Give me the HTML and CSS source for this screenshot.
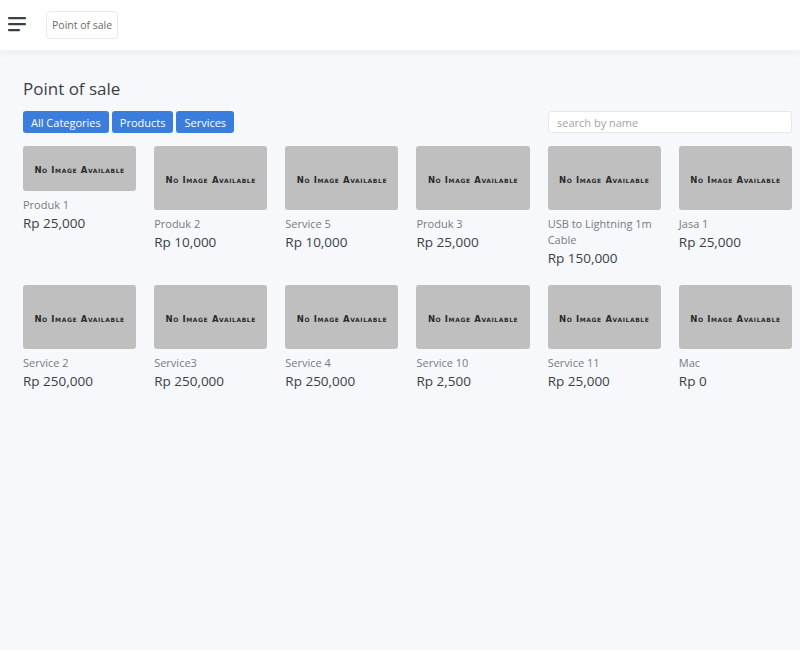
FILE: index.html
```html
<!DOCTYPE html>
<html lang="id">
<head>
<meta charset="utf-8">
<title>Point of sale</title>
<link rel="stylesheet" href="styles.css">
</head>
<body>
<header class="topbar">
  <button class="burger" aria-label="menu">
    <svg width="19" height="16" viewBox="0 0 19 16"><rect x="0" y="1" width="18" height="2.2" rx="1" fill="#3b3f46"/><rect x="0" y="7" width="18" height="2.2" rx="1" fill="#3b3f46"/><rect x="0" y="13" width="12" height="2.2" rx="1" fill="#3b3f46"/></svg>
  </button>
  <div class="crumb">Point of sale</div>
</header>
<main class="content">
  <h1 class="title">Point of sale</h1>
  <div class="toolbar">
    <div class="filters">
      <button class="btn">All Categories</button>
      <button class="btn">Products</button>
      <button class="btn">Services</button>
    </div>
    <input class="search" type="text" placeholder="search by name">
  </div>
  <div class="grid">
    <div class="card"><div class="img short">No Image Available</div><div class="name">Produk 1</div><div class="price">Rp 25,000</div></div>
    <div class="card"><div class="img">No Image Available</div><div class="name">Produk 2</div><div class="price">Rp 10,000</div></div>
    <div class="card"><div class="img">No Image Available</div><div class="name">Service 5</div><div class="price">Rp 10,000</div></div>
    <div class="card"><div class="img">No Image Available</div><div class="name">Produk 3</div><div class="price">Rp 25,000</div></div>
    <div class="card"><div class="img">No Image Available</div><div class="name">USB to Lightning 1m Cable</div><div class="price">Rp 150,000</div></div>
    <div class="card"><div class="img">No Image Available</div><div class="name">Jasa 1</div><div class="price">Rp 25,000</div></div>
    <div class="card"><div class="img">No Image Available</div><div class="name">Service 2</div><div class="price">Rp 250,000</div></div>
    <div class="card"><div class="img">No Image Available</div><div class="name">Service3</div><div class="price">Rp 250,000</div></div>
    <div class="card"><div class="img">No Image Available</div><div class="name">Service 4</div><div class="price">Rp 250,000</div></div>
    <div class="card"><div class="img">No Image Available</div><div class="name">Service 10</div><div class="price">Rp 2,500</div></div>
    <div class="card"><div class="img">No Image Available</div><div class="name">Service 11</div><div class="price">Rp 25,000</div></div>
    <div class="card"><div class="img">No Image Available</div><div class="name">Mac</div><div class="price">Rp 0</div></div>
  </div>
</main>
</body>
</html>
```
FILE: styles.css
```css
* { box-sizing: border-box; }
html, body { margin: 0; padding: 0; }
body {
  background: #f6f8fc;
  font-family: "Open Sans", "Liberation Sans", sans-serif;
  color: #3b3f46;
  min-height: 650px;
}
.topbar {
  height: 50px;
  background: #fff;
  display: flex;
  align-items: center;
  padding-left: 8px;
  box-shadow: 0 2px 8px rgba(30, 40, 60, 0.06);
  position: relative;
}
.burger {
  border: 0;
  background: none;
  padding: 0;
  width: 19px;
  height: 16px;
  display: flex;
  margin-top: -2px;
}
.crumb {
  margin-left: 19px;
  height: 28px;
  padding: 0 5px;
  border: 1px solid #e8eaee;
  border-radius: 4px;
  display: flex;
  align-items: center;
  font-size: 10.5px;
  color: #6e6a66;
}
.content {
  padding: 27px 8px 20px 23px;
}
.title {
  margin: 0 0 10px 0;
  font-size: 17px;
  font-weight: 500;
  line-height: 24px;
  color: #3b3f46;
}
.toolbar {
  display: flex;
  justify-content: space-between;
  align-items: center;
  height: 22px;
}
.filters { display: flex; gap: 3px; }
.btn {
  height: 22px;
  padding: 0 8px;
  border: 0;
  border-radius: 3px;
  background: #3b7ddd;
  color: #fff;
  font-family: inherit;
  font-size: 11px;
}
.search {
  width: 244px;
  height: 22px;
  border: 1px solid #e4e7eb;
  border-radius: 3px;
  background: #fff;
  padding: 0 8px;
  font-family: inherit;
  font-size: 11px;
}
.search::placeholder { color: #a0a4aa; }
.grid {
  margin-top: 13px;
  display: grid;
  grid-template-columns: repeat(6, 1fr);
  column-gap: 18px;
  row-gap: 17px;
  align-items: start;
}
.img {
  height: 64px;
  padding-top: 4px;
  background: #bfbfbf;
  border-radius: 3px;
  display: flex;
  align-items: center;
  justify-content: center;
  font-family: "DejaVu Sans", sans-serif;
  font-variant: small-caps;
  font-weight: bold;
  font-size: 8.5px;
  letter-spacing: 0.6px;
  color: #2a2a2a;
}
.img.short { height: 45px; padding-top: 2px; }
.name {
  margin-top: 6px;
  font-size: 11px;
  line-height: 16px;
  color: #777b82;
}
.price {
  font-size: 13.5px;
  line-height: 20px;
  color: #3b3f46;
}
```
